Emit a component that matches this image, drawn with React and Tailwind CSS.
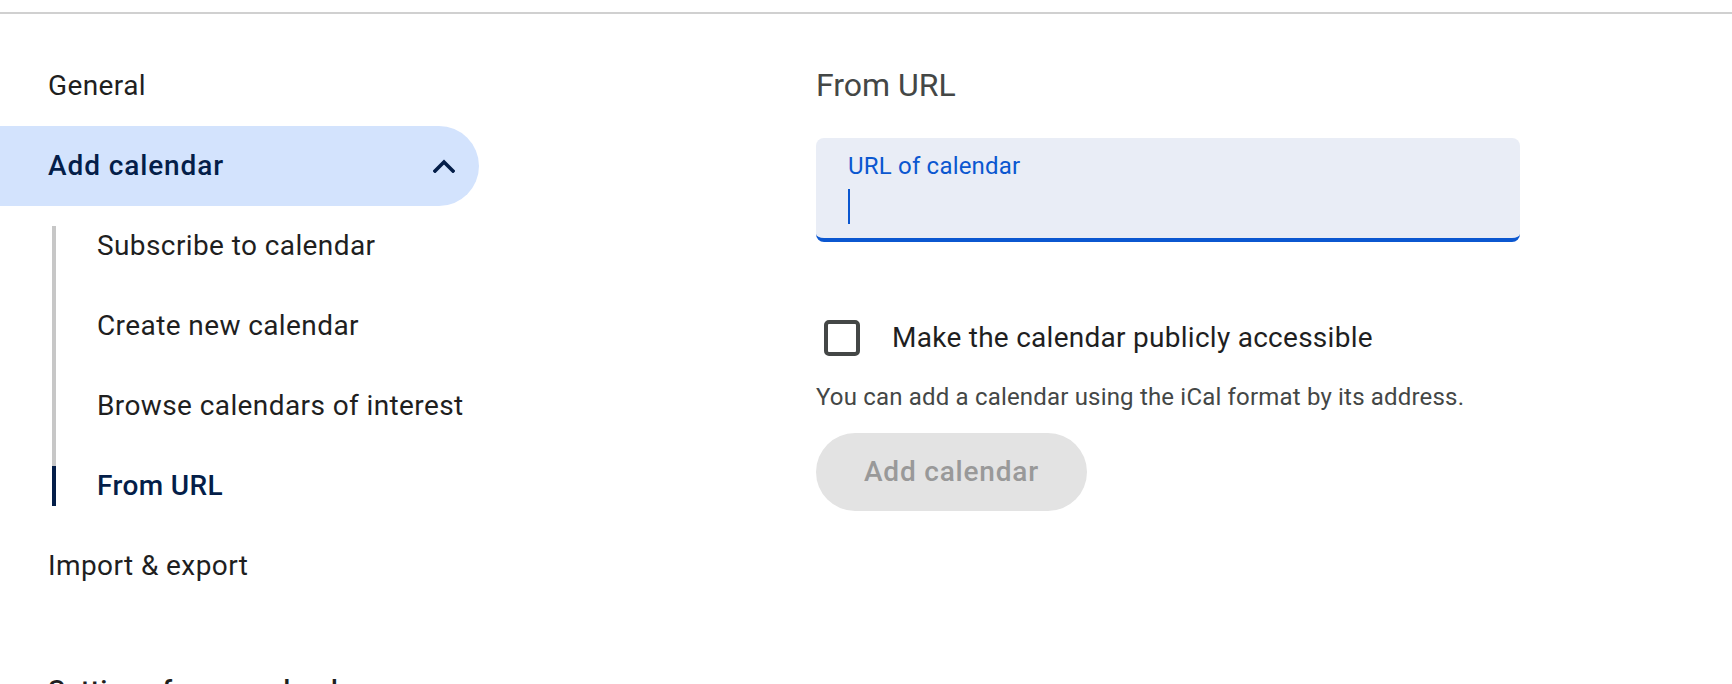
export default function App() {
  return (
    <div className="w-[1732px] h-[684px] overflow-hidden bg-white font-[Roboto,sans-serif]">
      <div className="h-[12px]" />
      <div className="h-[2px] bg-[#d0d0d0]" />
      <div className="flex">
        {/* Left nav */}
        <div className="w-[816px] shrink-0 pt-[32px] tracking-[0.4px]">
          <div className="h-[80px] flex items-center pl-[48px] text-[28px] text-[#1f1f1f]">General</div>
          <div className="h-[80px] w-[479px] rounded-r-full bg-[#d3e3fd] flex items-center justify-between pl-[48px] pr-[24px]">
            <span className="text-[28px] font-medium tracking-[0.9px] text-[#041e49]">Add calendar</span>
            <svg width="22" height="14" viewBox="0 0 22 14" fill="none">
              <path d="M2 12 L11 3 L20 12" stroke="#041e49" strokeWidth="3.6" strokeLinecap="square" />
            </svg>
          </div>

          <div className="flex h-[80px]">
            <div className="ml-[52px] w-[4px] flex flex-col">
              <div className="h-[20px]" />
              <div className="flex-1 bg-[#c7c7c7]" />
            </div>
            <div className="pl-[41px] flex items-center text-[28px] text-[#1f1f1f]">Subscribe to calendar</div>
          </div>
          <div className="flex h-[80px]">
            <div className="ml-[52px] w-[4px] bg-[#c7c7c7]" />
            <div className="pl-[41px] flex items-center text-[28px] text-[#1f1f1f]">Create new calendar</div>
          </div>
          <div className="flex h-[80px]">
            <div className="ml-[52px] w-[4px] bg-[#c7c7c7]" />
            <div className="pl-[41px] flex items-center text-[28px] text-[#1f1f1f]">Browse calendars of interest</div>
          </div>
          <div className="flex h-[80px]">
            <div className="ml-[52px] w-[4px] flex flex-col">
              <div className="h-[20px] bg-[#c7c7c7]" />
              <div className="h-[40px] bg-[#041e49]" />
              <div className="h-[20px]" />
            </div>
            <div className="pl-[41px] flex items-center text-[28px] font-medium text-[#041e49]">From URL</div>
          </div>

          <div className="h-[80px] flex items-center pl-[48px] text-[28px] text-[#1f1f1f]">Import &amp; export</div>
          <div className="mt-[65px] pl-[48px] text-[28px] leading-[40px] font-medium text-[#1f1f1f]">Settings for my calendars</div>
        </div>

        {/* Right content */}
        <div className="pt-[51px] w-[704px]">
          <div className="text-[32px] leading-[40px] text-[#444746]">From URL</div>
          <div className="mt-[33px] h-[104px] rounded-lg bg-[#e9edf6] border-b-4 border-[#0b57d0] pl-[32px] pt-[12px]">
            <div className="text-[24px] leading-[32px] tracking-[0.2px] text-[#0b57d0]">URL of calendar</div>
            <div className="mt-[7px] h-[35px] w-[2px] bg-[#0b57d0]" />
          </div>
          <div className="mt-[78px] flex items-center h-[36px]">
            <div className="ml-[8px] w-[36px] h-[36px] border-4 border-[#444746] rounded-[5px]" />
            <span className="ml-[32px] text-[28px] tracking-[0.27px] text-[#1f1f1f]">Make the calendar publicly accessible</span>
          </div>
          <div className="mt-[25px] text-[24px] leading-[32px] tracking-[0.18px] text-[#444746]">
            You can add a calendar using the iCal format by its address.
          </div>
          <div className="mt-[20px] inline-flex items-center h-[78px] px-[48px] rounded-full bg-[#e3e3e3] text-[28px] font-medium tracking-[0.8px] text-[#999999]">
            Add calendar
          </div>
        </div>
      </div>
    </div>
  );
}
